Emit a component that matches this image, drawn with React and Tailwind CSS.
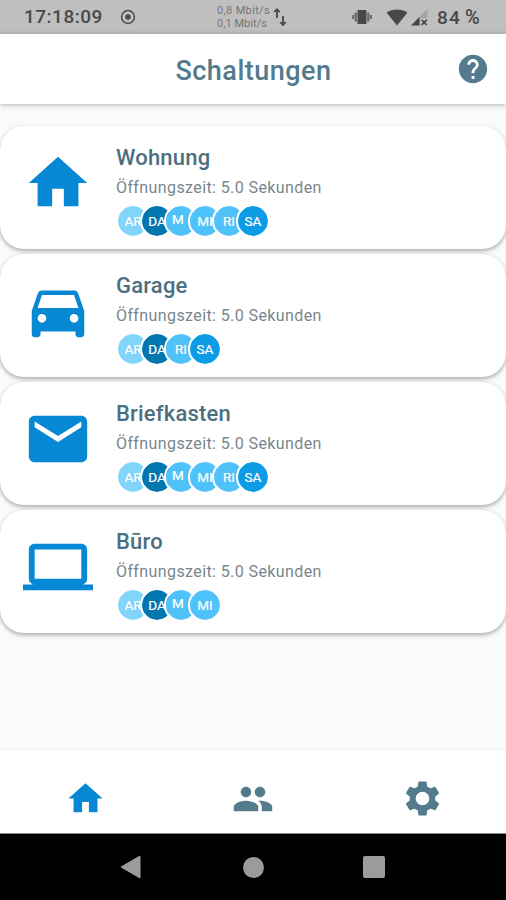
import React from 'react';
import { MdPeople, MdHelp } from 'react-icons/md';

const PATHS = {
  home: 'M10 20v-6h4v6h5v-8h3L12 3 2 12h3v8z',
  car: 'M18.92 6.01C18.72 5.42 18.16 5 17.5 5h-11c-.66 0-1.21.42-1.42 1.01L3 12v8c0 .55.45 1 1 1h1c.55 0 1-.45 1-1v-1h12v1c0 .55.45 1 1 1h1c.55 0 1-.45 1-1v-8l-2.08-5.99zM6.5 16c-.83 0-1.5-.67-1.5-1.5S5.67 13 6.5 13s1.5.67 1.5 1.5S7.33 16 6.5 16zm11 0c-.83 0-1.5-.67-1.5-1.5s.67-1.5 1.5-1.5 1.5.67 1.5 1.5-.67 1.5-1.5 1.5zM5 11l1.5-4.5h11L19 11H5z',
  mail: 'M20 4H4c-1.1 0-1.99.9-1.99 2L2 18c0 1.1.9 2 2 2h16c1.1 0 2-.9 2-2V6c0-1.1-.9-2-2-2zm0 4l-8 5-8-5V6l8 5 8-5v2z',
  laptop: 'M20 18c1.1 0 1.99-.9 1.99-2L22 6c0-1.1-.9-2-2-2H4c-1.1 0-2 .9-2 2v10c0 1.1.9 2 2 2H0v2h24v-2h-4zM4 6h16v10H4V6z',
};

const USERS = {
  AR: 'bg-[#81d4fa]',
  DA: 'bg-[#0277ae]',
  M: 'bg-[#4fc3f9]',
  MI: 'bg-[#4fc3f9]',
  RI: 'bg-[#4fc3f9]',
  SA: 'bg-[#0c9ce6]',
};

const items = [
  { name: 'Wohnung', icon: 'home', users: ['AR', 'DA', 'M', 'MI', 'RI', 'SA'] },
  { name: 'Garage', icon: 'car', users: ['AR', 'DA', 'RI', 'SA'] },
  { name: 'Briefkasten', icon: 'mail', users: ['AR', 'DA', 'M', 'MI', 'RI', 'SA'] },
  { name: 'Būro', icon: 'laptop', users: ['AR', 'DA', 'M', 'MI'] },
];

const Icon = ({ name, className }) => (
  <svg viewBox="0 0 24 24" fill="currentColor" className={className}>
    <path d={PATHS[name]} />
  </svg>
);

const GearIcon = ({ className }) => (
  <svg viewBox="-12 -12 24 24" fill="currentColor" className={className}>
    <circle r="5.75" fill="none" stroke="currentColor" strokeWidth="3.5" />
    {[0, 60, 120, 180, 240, 300].map((angle) => (
      <path key={angle} transform={`rotate(${angle})`} d="M-2.9-6-2.4-9.6Q-2.3-10-1.9-10H1.9Q2.3-10 2.4-9.6L2.9-6z" />
    ))}
  </svg>
);

const StatusBar = () => (
  <div className="flex h-[34px] shrink-0 items-center bg-[#bfbfbf] pl-[24px] text-[#484848]">
    <div className="w-[96px] text-[19px] font-medium leading-[34px] tracking-[0.5px]">17:18:09</div>
    <svg viewBox="0 0 16 16" className="h-[16px] w-[16px]">
      <circle cx="8" cy="8" r="6.4" fill="none" stroke="currentColor" strokeWidth="1.5" />
      <circle cx="8" cy="8" r="2.8" fill="currentColor" />
    </svg>
    <div className="ml-[81px] w-[56px] whitespace-nowrap text-[11px] leading-[13px] text-[#757575]">
      <div className="tracking-[0.35px]">0,8 Mbit/s</div>
      <div className="tracking-[0.05px]">0,1 Mbit/s</div>
    </div>
    <svg viewBox="0 0 14 20" className="h-[20px] w-[14px]" fill="none" stroke="currentColor" strokeWidth="1.8">
      <path d="M4 11V2.5M1.2 5.2 4 2.2l2.8 3M10 9v8.5M7.2 15l2.8 3 2.8-3" />
    </svg>
    <svg viewBox="0 0 20 16" className="ml-[65px] h-[16px] w-[20px]" fill="currentColor">
      <path d="M5.5 1h9v14h-9z" />
      <path d="M2.6 3.5h2.2v9H2.6zM15.2 3.5h2.2v9h-2.2zM.2 6H2v4H.2zM18 6h1.8v4H18z" opacity="0.75" />
    </svg>
    <svg viewBox="0 0 22 17" className="ml-[14px] h-[17px] w-[22px]" fill="currentColor">
      <path d="M.7 3.8C6.5-.6 15.5-.6 21.3 3.8L11 16.5z" />
    </svg>
    <svg viewBox="0 0 17 17" className="ml-[3px] h-[17px] w-[17px]">
      <path d="M0 16.5 16.5 0v9H9v7.5z" fill="#a2a2a2" />
      <path d="M0 16.5 8.5 8v8.5z" fill="currentColor" />
      <path d="m10.6 10.8 5.2 5.2m0-5.2-5.2 5.2" stroke="currentColor" strokeWidth="1.7" />
    </svg>
    <div className="ml-[9px] flex items-baseline gap-[4px] whitespace-nowrap text-[19px] font-medium leading-[34px]">
      <span className="tracking-[1.2px]">84</span>
      <span className="text-[20px]">%</span>
    </div>
  </div>
);

const Header = () => (
  <header className="relative z-10 flex h-[70px] shrink-0 items-center bg-white pr-4 shadow-[0_1px_5px_rgba(0,0,0,0.28)]">
    <h1 className="flex-1 pl-[51px] pt-[4px] text-center text-[27px] font-medium leading-8 tracking-[0.5px] text-[#547a8d]">
      Schaltungen
    </h1>
    <MdHelp className="size-[34px] text-[#547a8d]" />
  </header>
);

const Avatar = ({ label }) => (
  <div
    className={`-ml-[10px] flex size-[34px] items-center justify-center rounded-full border-2 border-white bg-clip-padding pt-px text-[13.5px] leading-none text-white [-webkit-text-stroke:0.2px_white] ${USERS[label]}`}
  >
    <span className={label === 'M' ? '-mt-[4px] -ml-[6px]' : ''}>{label}</span>
  </div>
);

const Card = ({ item }) => (
  <div className="flex h-[123px] rounded-[24px] bg-white pl-[23px] pt-[22px] shadow-[0_2px_4px_rgba(0,0,0,0.32)]">
    <Icon name={item.icon} className="size-[70px] text-[#0688d4]" />
    <div className="ml-[23px] -mt-[4px]">
      <h2 className="text-[22px] font-medium leading-[28px] tracking-[0.2px] text-[#4c6f80]">{item.name}</h2>
      <p className="mt-[4px] text-[16px] leading-[24px] tracking-[0.4px] text-[#78868d]">Öffnungszeit: 5.0 Sekunden</p>
      <div className="mt-[4px] flex pl-[10px]">
        {item.users.map((user) => (
          <Avatar key={user} label={user} />
        ))}
      </div>
    </div>
  </div>
);

const TabBar = () => (
  <nav className="grid h-[84px] shrink-0 grid-cols-3 place-items-center border-b border-[#8a8a8a] bg-white pt-[14px] pl-px text-[#547a8d] shadow-[0_-1px_2px_rgba(0,0,0,0.05)]">
    <Icon name="home" className="size-[41px] text-[#0688d4]" />
    <MdPeople className="size-[42px]" />
    <GearIcon className="ml-[2px] size-[41px]" />
  </nav>
);

const SystemNav = () => (
  <div className="flex h-[66px] shrink-0 items-center bg-black pl-[120px] text-[#9b9b9b]">
    <svg viewBox="0 0 21 24" className="h-[24px] w-[21px]" fill="currentColor">
      <path d="M20 1v22L1 12z" stroke="currentColor" strokeLinejoin="round" />
    </svg>
    <div className="ml-[102px] size-[21px] rounded-full bg-[#9b9b9b]" />
    <div className="ml-[99px] size-[22px] rounded-[2px] bg-[#9b9b9b]" />
  </div>
);

const App = () => {
  return (
    <div className="flex h-[900px] w-[506px] flex-col overflow-hidden bg-[#fafafa] font-['Roboto',sans-serif]">
      <StatusBar />
      <Header />
      <main className="flex flex-1 flex-col gap-[5px] pt-[22px]">
        {items.map((item) => (
          <Card key={item.name} item={item} />
        ))}
      </main>
      <TabBar />
      <SystemNav />
    </div>
  );
};

export default App;
